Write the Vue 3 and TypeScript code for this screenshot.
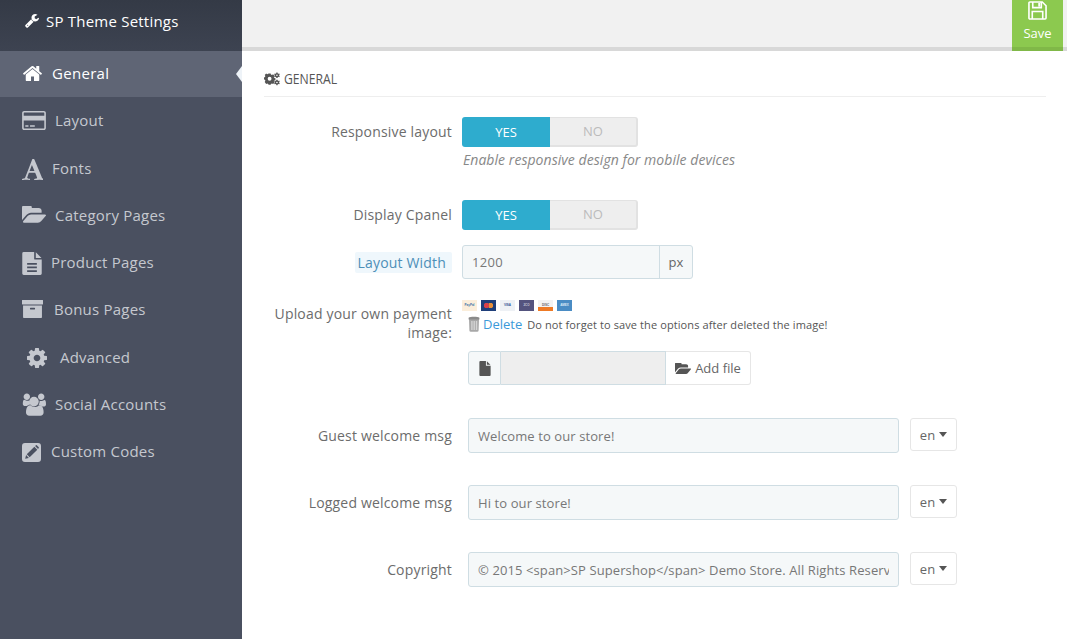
<script setup lang="ts">
interface NavItem { label: string; vb: string; d: string; cls: string; active?: boolean }

const wrench = 'M448 1472q0-26-19-45t-45-19-45 19-19 45 19 45 45 19 45-19 19-45zm644-420l-682 682q-37 37-90 37-52 0-91-37l-106-108q-38-36-38-90 0-53 38-91l681-681q39 98 114.5 173.5t173.5 114.5zm634-435q0 39-23 106-47 134-164.5 217.5t-258.5 83.5q-185 0-316.5-131.5t-131.5-316.5 131.5-316.5 316.5-131.5q58 0 121.5 16.5t107.5 46.5q16 11 16 28t-16 28l-293 169v224l193 107q5-3 79-48.5t135.5-81 70.5-35.5q15 0 23.5 10t8.5 25z'
const folder = 'M1879 952q0 31-31 66l-336 396q-43 51-120.5 86.5t-143.5 35.5h-1088q-34 0-60.5-13t-26.5-43q0-31 31-66l336-396q43-51 120.5-86.5t143.5-35.5h1088q34 0 60.5 13t26.5 43zm-343-344v160h-832q-94 0-197 47.5t-164 119.5l-337 396-5 6q0-4-.5-12.5t-.5-12.5v-960q0-92 66-158t158-66h320q92 0 158 66t66 158v32h544q92 0 158 66t66 158z'
const cog = 'M1152 896q0-106-75-181t-181-75-181 75-75 181 75 181 181 75 181-75 75-181zm512-109v222q0 12-8 23t-20 13l-185 28q-19 54-39 91 35 50 107 138 10 12 10 25t-9 23q-27 37-99 108t-94 71q-12 0-26-9l-138-108q-44 23-91 38-16 136-29 186-7 28-36 28h-222q-14 0-24.5-8.5t-11.5-21.5l-28-184q-49-16-90-37l-141 107q-10 9-25 9-14 0-25-11-126-114-165-168-7-10-7-23 0-12 8-23 15-21 51-66.5t54-70.5q-27-50-41-99l-183-27q-13-2-21-12.5t-8-23.5v-222q0-12 8-23t19-13l186-28q14-46 39-92-40-57-107-138-10-12-10-24 0-10 9-23 26-36 98.5-107.5t94.5-71.5q13 0 26 10l138 107q44-23 91-38 16-136 29-186 7-28 36-28h222q14 0 24.5 8.5t11.5 21.5l28 184q49 16 90 37l142-107q9-9 24-9 13 0 25 10 129 119 165 170 7 8 7 22 0 12-8 23-15 21-51 66.5t-54 70.5q26 50 41 98l183 28q13 2 21 12.5t8 23.5z'

const nav: NavItem[] = [
  { label: 'General', cls: 'i-home', active: true, vb: '0 0 1792 1792', d: 'M1472 992v480q0 26-19 45t-45 19h-384v-384h-256v384h-384q-26 0-45-19t-19-45v-480q0-1 .5-3t.5-3l575-474 575 474q1 2 1 6zm223-69l-62 74q-8 9-21 11h-3q-13 0-21-7l-692-577-692 577q-12 8-24 7-13-2-21-11l-62-74q-8-10-7-23.5t11-21.5l719-599q32-26 76-26t76 26l244 204v-195q0-14 9-23t23-9h192q14 0 23 9t9 23v408l219 182q10 8 11 21.5t-7 23.5z' },
  { label: 'Layout', cls: 'i-card', vb: '0 128 1920 1536', d: 'M1760 128q66 0 113 47t47 113v1216q0 66-47 113t-113 47h-1600q-66 0-113-47t-47-113v-1216q0-66 47-113t113-47h1600zm-1600 128q-13 0-22.5 9.5t-9.5 22.5v224h1664v-224q0-13-9.5-22.5t-22.5-9.5h-1600zm1600 1280q13 0 22.5-9.5t9.5-22.5v-608h-1664v608q0 13 9.5 22.5t22.5 9.5h1600zm-1504-128v-128h256v128h-256zm384 0v-128h384v128h-384z' },
  { label: 'Fonts', cls: 'i-font', vb: '64 128 1536 1536', d: 'M789 559l-170 450q33 0 136.5 2t160.5 2q19 0 57-2-87-253-184-452zm-725 1105l2-79q23-7 56-12.5t57-10.5 49.5-14.5 44.5-29 31-50.5l237-616 280-724h128q8 14 11 21l205 480q33 78 106 257.5t114 274.5q15 34 58 144.5t72 168.5q20 45 35 57 19 15 88 29.5t84 20.5q6 38 6 57 0 5-.5 13.5t-.5 12.5q-63 0-190-8t-191-8q-76 0-215 7t-178 8q0-43 4-78l131-28q1 0 12.5-2.5t15.5-3.5 14.5-4.5 15-6.5 11-8 9-11 2.5-14q0-16-31-96.5t-72-177.5-42-100l-450-2q-26 58-76.5 195.5t-50.5 162.5q0 22 14 37.5t43.5 24.5 48.5 13.5 57 8.5 41 4q1 19 1 58 0 9-2 27-58 0-174.5-10t-174.5-10q-8 0-26.5 4t-21.5 4q-80 14-188 14z' },
  { label: 'Category Pages', cls: 'i-folder', vb: '0 256 1879 1280', d: folder },
  { label: 'Product Pages', cls: 'i-file', vb: '0 0 1408 1664', d: 'M140 0H860V480a64 64 0 0 0 64 64H1408V1560a104 104 0 0 1-104 104H104A104 104 0 0 1 0 1560V104A104 104 0 0 1 104 0H140ZM980 20L1390 430H980V20ZM352 800V928H1056V800H352ZM352 1056V1184H1056V1056H352ZM352 1312V1440H1056V1312H352Z' },
  { label: 'Bonus Pages', cls: 'i-archive', vb: '0 0 1792 1536', d: 'M30 0H1762A30 30 0 0 1 1792 30V350A30 30 0 0 1 1762 380H30A30 30 0 0 1 0 350V30A30 30 0 0 1 30 0ZM90 460H1702V1470A66 66 0 0 1 1636 1536H156A66 66 0 0 1 90 1470V460ZM720 660A40 40 0 0 0 680 700V760A40 40 0 0 0 720 800H1072A40 40 0 0 0 1112 760V700A40 40 0 0 0 1072 660H720Z' },
  { label: 'Advanced', cls: 'i-cog', vb: '128 128 1536 1536', d: cog },
  { label: 'Social Accounts', cls: 'i-users', vb: '0 0 1920 1792', d: 'M657 896q-162 5-265 128h-134q-82 0-138-40.5t-56-118.5q0-353 124-353 6 0 43.5 21t97.5 42.5 119 21.5q67 0 133-23-5 37-5 66 0 139 81 256zm1071 637q0 120-73 189.5t-194 69.5h-874q-121 0-194-69.5t-73-189.5q0-53 3.5-103.5t14-109 26.5-108.5 43-97.5 62-81 85.5-53.5 111.5-20q10 0 43 21.5t73 48 107 48 135 21.5 135-21.5 107-48 73-48 43-21.5q61 0 111.5 20t85.5 53.5 62 81 43 97.5 26.5 108.5 14 109 3.5 103.5zm-1088-1253q0 106-75 181t-181 75-181-75-75-181 75-181 181-75 181 75 75 181zm704 384q0 159-112.5 271.5t-271.5 112.5-271.5-112.5-112.5-271.5 112.5-271.5 271.5-112.5 271.5 112.5 112.5 271.5zm576 225q0 78-56 118.5t-138 40.5h-134q-103-123-265-128 81-117 81-256 0-29-5-66 66 23 133 23 59 0 119-21.5t97.5-42.5 43.5-21q124 0 124 353zm-128-609q0 106-75 181t-181 75-181-75-75-181 75-181 181-75 181 75 75 181z' },
  { label: 'Custom Codes', cls: 'i-pencil', vb: '0 0 1536 1536', d: 'M240 0H1296A240 240 0 0 1 1536 240V1296A240 240 0 0 1 1296 1536H240A240 240 0 0 1 0 1296V240A240 240 0 0 1 240 0ZM1000 300L1236 536L620 1152L384 916ZM330 980L556 1206L256 1280ZM1060 240L1130 180Q1160 155 1195 180L1356 340Q1381 375 1356 405L1296 476Z' }
]

const cards = [
  { t: 'PayPal', c: 'pp' }, { t: '', c: 'mc' }, { t: 'VISA', c: 'vi' },
  { t: '2CO', c: 'co' }, { t: 'DISC', c: 'di' }, { t: 'AMEX', c: 'ax' }
]

const langRows = [
  { label: 'Guest welcome msg', value: 'Welcome to our store!' },
  { label: 'Logged welcome msg', value: 'Hi to our store!' },
  { label: 'Copyright', value: '© 2015 <span>SP Supershop</span> Demo Store. All Rights Reserved.' }
]
</script>

<template>
  <div class="page">
    <aside class="side">
      <div class="brand">
        <svg class="brand-ic" viewBox="64 128 1664 1664"><path fill="currentColor" :d="wrench" /></svg>
        <span>SP Theme Settings</span>
      </div>
      <nav>
        <a v-for="n in nav" :key="n.label" class="item" :class="[n.cls, { on: n.active }]">
          <svg class="ic" :viewBox="n.vb"><path fill="currentColor" fill-rule="evenodd" :d="n.d" /></svg>
          <span>{{ n.label }}</span>
        </a>
      </nav>
    </aside>

    <main class="main">
      <header class="top">
        <button class="save">
          <svg viewBox="0 0 20 20" class="save-ic">
            <path fill="none" stroke="currentColor" stroke-width="1.7" d="M2 1h13l4 4v13a1 1 0 0 1-1 1H2a1 1 0 0 1-1-1V2a1 1 0 0 1 1-1z" />
            <path fill="none" stroke="currentColor" stroke-width="1.7" d="M5 1v6h9V1M4.500 19v-8h11v8" />
            <path fill="currentColor" d="M10.800 2h2v4h-2z" />
          </svg>
          <span>Save</span>
        </button>
      </header>

      <section class="panel">
        <h3 class="title">
          <svg class="cogs" viewBox="0 0 20 16">
            <g fill="currentColor">
              <path fill-rule="evenodd" d="M5.700 3.500h2.600l.4 1.500 1.200.5 1.400-.8 1.800 1.800-.8 1.400.5 1.200 1.500.4v2.600l-1.500.4-.5 1.200.8 1.400-1.800 1.800-1.400-.8-1.200.5-.4 1.200H5.700l-.4-1.200-1.200-.5-1.400.8L.9 14.100l.8-1.400-.5-1.200-1.200-.4V8.500l1.200-.4.500-1.200-.8-1.400 1.800-1.800 1.400.8 1.200-.5zM7 7.800a2.400 2.400 0 1 0 0 4.800 2.400 2.400 0 0 0 0-4.800z" transform="translate(0 -2.500)" />
              <path fill-rule="evenodd" d="M15.500 0h1.400l.3 1 .8.400 1-.4.700 1.100-.7.800v.9l.7.800-.7 1.100-1-.4-.8.400-.3 1h-1.400l-.3-1-.8-.4-1 .4-.7-1.100.7-.8v-.9l-.7-.8.7-1.100 1 .4.800-.4zM16.200 2.300a1 1 0 1 0 0 2 1 1 0 0 0 0-2z" />
              <path fill-rule="evenodd" d="M15.500 9h1.400l.3 1 .8.400 1-.4.700 1.100-.7.800v.9l.7.800-.7 1.100-1-.4-.8.400-.3 1h-1.400l-.3-1-.8-.4-1 .4-.7-1.100.7-.8v-.9l-.7-.8.7-1.100 1 .4.800-.4zM16.200 11.300a1 1 0 1 0 0 2 1 1 0 0 0 0-2z" />
            </g>
          </svg>
          <span class="title-text">GENERAL</span>
        </h3>

        <div class="row r-resp">
          <label class="lab">Responsive layout</label>
          <div class="switch"><span class="yes">YES</span><span class="no">NO</span></div>
        </div>
        <p class="help">Enable responsive design for mobile devices</p>

        <div class="row r-cpanel">
          <label class="lab">Display Cpanel</label>
          <div class="switch"><span class="yes">YES</span><span class="no">NO</span></div>
        </div>

        <div class="row r-width">
          <label class="lab"><span class="hint">Layout Width</span></label>
          <div class="group">
            <input class="g-in" value="1200" />
            <span class="g-add">px</span>
          </div>
        </div>

        <div class="row r-upload">
          <label class="lab two">Upload your own payment image:</label>
          <div class="up">
            <div class="cards"><span v-for="c in cards" :key="c.c" class="cc" :class="c.c">{{ c.t }}</span></div>
            <div class="del">
              <svg class="trash" viewBox="0 0 12 16">
                <path fill="#a8a8a8" d="M1 3h10l-.4 11.500a1.400 1.400 0 0 1-1.400 1.300H2.800a1.400 1.400 0 0 1-1.400-1.300z" />
                <path fill="#d4d4d4" d="M3.200 5h1.400v9H3.200zM5.500 5h1.400v9H5.500zM7.800 5h1.400v9H7.800z" />
                <path fill="#8a8a8a" d="M.6 1.700C2 .4 10 .4 11.400 1.700v1.700H.6z" />
              </svg>
              <a class="link">Delete</a>
              <small>Do not forget to save the options after deleted the image!</small>
            </div>
            <div class="file">
              <span class="f-ic">
                <svg viewBox="0 0 12 16" class="doc"><path fill="currentColor" d="M0 1a1 1 0 0 1 1-1h6v5h5v10a1 1 0 0 1-1 1H1a1 1 0 0 1-1-1zM8 .2 11.800 4H8z" /></svg>
              </span>
              <span class="f-name"></span>
              <span class="f-btn">
                <svg viewBox="0 256 1879 1280" class="open"><path fill="currentColor" :d="folder" /></svg>
                Add file
              </span>
            </div>
          </div>
        </div>

        <div v-for="r in langRows" :key="r.label" class="row r-lang">
          <label class="lab">{{ r.label }}</label>
          <input class="lang-in" :value="r.value" />
          <span class="lang-btn">en<i class="caret"></i></span>
        </div>
      </section>
    </main>
  </div>
</template>

<style>
html, body { margin: 0; padding: 0; background: #fff; overflow: hidden; }
</style>

<style scoped>
.page { display: flex; width: 1067px; height: 639px; overflow: hidden; font-family: "Open Sans", "Liberation Sans", sans-serif; font-size: 14px; color: #666; }

.side { width: 242px; flex: none; background: #4a5060; color: #c5c8cf; }
.brand { height: 51px; display: flex; align-items: center; padding: 0 0 9px 25px; box-sizing: border-box; background: linear-gradient(#343a46, #3d4351); color: #fff; font-size: 15px; font-weight: 500; letter-spacing: .22px; }
.brand-ic { width: 14px; height: 14px; margin-right: 7px; }
.item { position: relative; display: flex; align-items: center; height: 47.25px; padding-left: 22px; font-size: 15px; letter-spacing: .22px; box-sizing: border-box; padding-bottom: .5px; }
.item.on { height: 46px; background: #5f6575; color: #fff; font-weight: 500; letter-spacing: .3px; padding-bottom: 2px; }
.item.on::after { content: ""; position: absolute; right: 0; top: 15px; border: 8px solid transparent; border-left: 0; border-right: 6px solid #eef3f8; }
.ic { flex: none; }
.i-home .ic { width: 21px; height: 21px; margin-right: 9px; }
.i-card .ic { width: 24px; height: 19px; margin-right: 9px; }
.i-font .ic { width: 21px; height: 21px; margin-right: 9px; margin-top: 4px; }
.i-folder .ic { width: 24px; height: 17px; margin-right: 9px; }
.i-file .ic { width: 20px; height: 23px; margin-right: 9px; margin-top: 2px; }
.i-archive .ic { width: 21px; height: 18px; margin-right: 11px; }
.i-cog { padding-left: 27px; }
.i-cog .ic { width: 20px; height: 20px; margin-right: 13px; margin-top: 2px; }
.i-users .ic { width: 24px; height: 23px; margin-right: 9px; margin-top: 2px; }
.i-pencil .ic { width: 19px; height: 19px; margin-right: 10px; margin-top: 3px; }

.main { flex: 1; min-width: 0; display: flex; flex-direction: column; }
.top { height: 47px; flex: none; background: #f1f1f1; border-bottom: 4px solid #d8d8d8; display: flex; justify-content: flex-end; padding-right: 4px; }
.save { width: 51px; height: 51px; border: 0; padding: 0; background: #8cc94f; border-bottom: 4px solid #80b848; color: #fff; font: inherit; font-size: 13px; font-weight: 500; display: flex; flex-direction: column; align-items: center; box-sizing: border-box; }
.save-ic { width: 19px; height: 19px; margin-top: 1px; }
.save span { line-height: 16px; margin-top: 5px; }

.panel { padding: 0 21px 0 22px; }
.title { margin: 0; height: 46px; box-sizing: border-box; border-bottom: 1px solid #eee; display: flex; align-items: center; gap: 4px; font-size: 14px; font-weight: 400; color: #555; padding-top: 10px; }
.title-text { display: inline-block; transform: scaleX(.87); transform-origin: left center; }
.cogs { width: 16px; height: 14px; color: #555; }

.row { display: flex; }
.lab { width: 188px; flex: none; margin-right: 10px; text-align: right; line-height: 20px; color: #6c6c6c; letter-spacing: .18px; }
.r-resp { margin-top: 20px; align-items: center; }
.r-cpanel { margin-top: 31px; align-items: center; }
.r-width { margin-top: 15px; align-items: center; }
.r-width .lab { padding-top: 2px; }
.r-upload { margin-top: 21px; }
.r-lang { margin-top: 32px; align-items: center; }
.r-upload + .r-lang { margin-top: 33px; }

.switch { width: 176px; height: 30px; display: flex; font-size: 13px; font-weight: 500; box-sizing: border-box; }
.yes { width: 88px; padding-bottom: 1px; box-sizing: border-box; background: #2eacce; color: #fff; border-radius: 3px 0 0 3px; display: flex; align-items: center; justify-content: center; }
.no { flex: 1; padding-bottom: 1px; background: #eee; color: #bbb; border: 1px solid #e2e2e2; border-width: 1px 2px 2px 0; border-radius: 0 3px 3px 0; display: flex; align-items: center; justify-content: center; }
.help { margin: 4px 0 0 199px; line-height: 18px; font-size: 14px; font-style: italic; color: #888; letter-spacing: .05px; }

.group { display: flex; width: 231px; height: 34px; border: 1px solid #cfdde3; border-radius: 3px; box-sizing: border-box; background: #f5f8f9; }
.g-in { flex: 1; min-width: 0; border: 0; background: none; padding: 0 9px; font: inherit; font-size: 13px; color: #777; outline: none; letter-spacing: .3px; }
.g-add { width: 32px; border-left: 1px solid #cfdde3; display: flex; align-items: center; justify-content: center; font-size: 13px; }
.hint { background: #eff7fc; color: #4d8fb8; padding: 1px 6px 1px 3px; border-radius: 2px; }

.lab.two { line-height: 19px; margin-top: 4px; }
.up { flex: 1; min-width: 0; }
.cards { display: flex; gap: 4px; height: 11px; }
.cc { width: 15px; height: 11px; font-size: 3px; line-height: 11px; text-align: center; overflow: hidden; font-family: "Liberation Sans", sans-serif; font-weight: 700; }
.pp { background: #fbeedb; color: #3a6ea5; }
.mc { background: radial-gradient(circle at 5.500px 5.500px, #d8404a 0 2.500px, transparent 3px), radial-gradient(circle at 9.500px 5.500px, #e8903a 0 2.500px, transparent 3px), #1f3f7a; }
.vi { background: #eef1f5; color: #2b4f8f; }
.co { background: #54537e; color: #c8c8d8; }
.di { background: linear-gradient(#f2f2f2 60%, #ee7a25 60%); color: #666; }
.ax { background: #4a8cc4; color: #dcebf7; }
.del { display: flex; align-items: center; margin: 4px 0 0 6px; height: 18px; }
.trash { width: 12px; height: 16px; margin-right: 3px; }
.link { color: #3b9ad9; font-size: 13px; margin-right: 5px; }
.del small { font-size: 11px; color: #555; letter-spacing: .1px; }
.file { display: flex; height: 34px; margin: 18px 0 0 6px; width: 283px; border-radius: 3px; box-sizing: border-box; }
.f-ic { width: 33px; background: #f5f8f9; border: 1px solid #cfdde3; border-radius: 3px 0 0 3px; box-sizing: border-box; display: flex; align-items: center; justify-content: center; color: #555; }
.doc { width: 12px; height: 15px; }
.f-name { width: 165px; background: #eee; border: 1px solid #cfdde3; border-left: 0; box-sizing: border-box; }
.f-btn { flex: 1; border: 1px solid #e6e6e6; border-left: 0; border-radius: 0 3px 3px 0; box-sizing: border-box; display: flex; align-items: center; justify-content: center; gap: 4px; font-size: 13px; color: #666; }
.open { width: 16px; height: 11px; color: #555; }

.r-lang .lab { margin-right: 16px; }
.lang-in { width: 431px; height: 35px; box-sizing: border-box; border: 1px solid #cfdde3; border-radius: 3px; background: #f5f8f9; padding: 0 9px; font: inherit; font-size: 13px; color: #777; outline: none; letter-spacing: .1px; }
.lang-btn { width: 47px; height: 33px; margin: -2px 0 0 11px; box-sizing: border-box; border: 1px solid #e6e6e6; border-radius: 3px; display: flex; align-items: center; justify-content: center; gap: 4px; font-size: 13px; color: #666; }
.caret { width: 0; height: 0; border: 4.500px solid transparent; border-top: 5px solid #555; border-bottom: 0; }
</style>
